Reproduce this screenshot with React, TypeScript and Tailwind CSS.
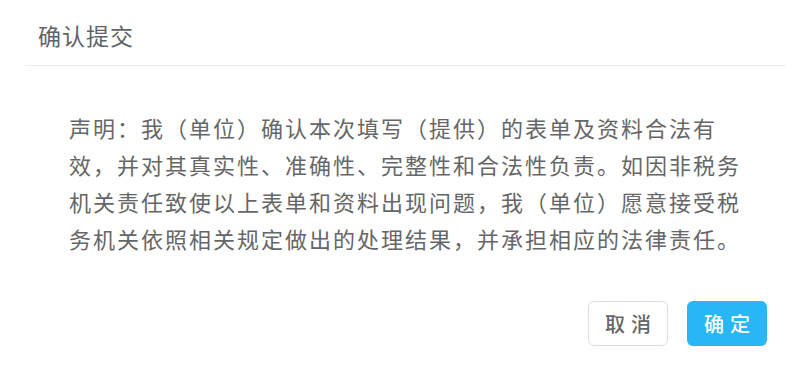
const cjk = { fontFamily: '"Noto Sans CJK SC", "Microsoft YaHei", sans-serif' }

export default function App() {
  return (
    <div className="w-[795px] h-[383px] bg-white overflow-hidden" style={cjk}>
      <div className="ml-[26px] w-[760px] flex flex-col">
        <div className="h-[66px] flex items-center pl-[12px] pt-[6px] border-b border-[#ebedf0]">
          <span className="text-[23px] tracking-[1px] text-[#5f6368] leading-none">确认提交</span>
        </div>
        <div className="pt-[43px] pl-[43px]">
          <p className="w-[680px] text-[22px] tracking-[2px] leading-[37px] text-[#666666]">
            声明：我（单位）确认本次填写（提供）的表单及资料合法有效，并对其真实性、准确性、完整性和合法性负责。如因非税务机关责任致使以上表单和资料出现问题，我（单位）愿意接受税务机关依照相关规定做出的处理结果，并承担相应的法律责任。
          </p>
        </div>
        <div className="flex justify-end gap-[19px] pr-[19px] mt-[44px]">
          <button className="w-[80px] h-[45px] rounded-[6px] border border-[#dcdee2] bg-white text-[20px] font-medium text-[#666666] tracking-[6px] pl-[6px] leading-none">
            取消
          </button>
          <button className="w-[80px] h-[45px] rounded-[6px] bg-[#29b6f6] text-[20px] font-medium text-white tracking-[6px] pl-[6px] leading-none">
            确定
          </button>
        </div>
      </div>
    </div>
  )
}
